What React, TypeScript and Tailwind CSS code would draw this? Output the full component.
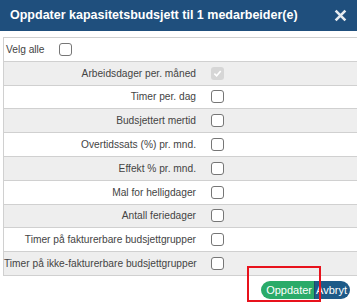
import React from "react";

const rows = [
  { label: "Arbeidsdager per. måned", disabled: true },
  { label: "Timer per. dag" },
  { label: "Budsjettert mertid" },
  { label: "Overtidssats (%) pr. mnd." },
  { label: "Effekt % pr. mnd." },
  { label: "Mal for helligdager" },
  { label: "Antall feriedager" },
  { label: "Timer på fakturerbare budsjettgrupper" },
  { label: "Timer på ikke-fakturerbare budsjettgrupper" },
];

function Box({ disabled }: { disabled?: boolean }) {
  if (disabled) {
    return (
      <span className="flex h-[13px] w-[13px] items-center justify-center rounded-[3px] bg-[#d6d6d6]">
        <svg width="9" height="9" viewBox="0 0 10 10" fill="none">
          <path d="M1.5 5.2 4 7.6 8.6 2.2" stroke="#fff" strokeWidth="1.8" />
        </svg>
      </span>
    );
  }
  return <span className="block h-[13px] w-[13px] rounded-[3px] border border-[#767676] bg-white" />;
}

export default function App() {
  return (
    <div className="relative h-[304px] w-[357px] overflow-hidden bg-white font-['Liberation_Sans',Arial,sans-serif]">
      {/* Header */}
      <div className="flex h-[31px] items-center justify-between bg-[#1f4f7d] pl-[10px] pr-[8px]">
        <span className="text-[12.5px] font-bold text-white">
          Oppdater kapasitetsbudsjett til 1 medarbeider(e)
        </span>
        <svg width="13" height="13" viewBox="0 0 12 12" className="mr-[2px]">
          <path d="M1.5 1.5 10.5 10.5M10.5 1.5 1.5 10.5" stroke="#e6ebf0" strokeWidth="2.4" />
        </svg>
      </div>

      {/* Table */}
      <div className="mt-[6px] ml-[3px] border-t border-l border-[#d0d0d0]">
        <div className="flex h-[23.8px] items-center border-b border-[#d0d0d0] bg-white pl-[2px] text-[10.2px] text-[#444]">
          <span className="w-[53px]">Velg alle</span>
          <Box />
        </div>
        {rows.map((r, i) => (
          <div
            key={r.label}
            className={`flex h-[23.8px] items-center border-b border-[#d0d0d0] text-[10.2px] text-[#444] ${
              i % 2 === 0 ? "bg-[#eeeeee]" : "bg-white"
            }`}
          >
            <span className="w-[192px] whitespace-nowrap text-right">{r.label}</span>
            <span className="ml-[15px]">
              <Box disabled={r.disabled} />
            </span>
          </div>
        ))}
      </div>

      {/* Buttons */}
      <div className="mt-[5px] flex justify-end pr-[7px]">
        <div className="flex h-[18px] text-[11px] text-white">
          <span className="flex items-center rounded-l-full bg-[#2aab69] pl-[5px] pr-[2px]">Oppdater</span>
          <span className="w-px bg-[#1c4a66]" />
          <span className="flex items-center rounded-r-full bg-[#1d5a88] pl-[1px] pr-[3px]">Avbryt</span>
        </div>
      </div>

      {/* annotation box */}
      <div className="absolute left-[247px] top-[266px] h-[36px] w-[74px] border-2 border-[#e8121c]" />
    </div>
  );
}
